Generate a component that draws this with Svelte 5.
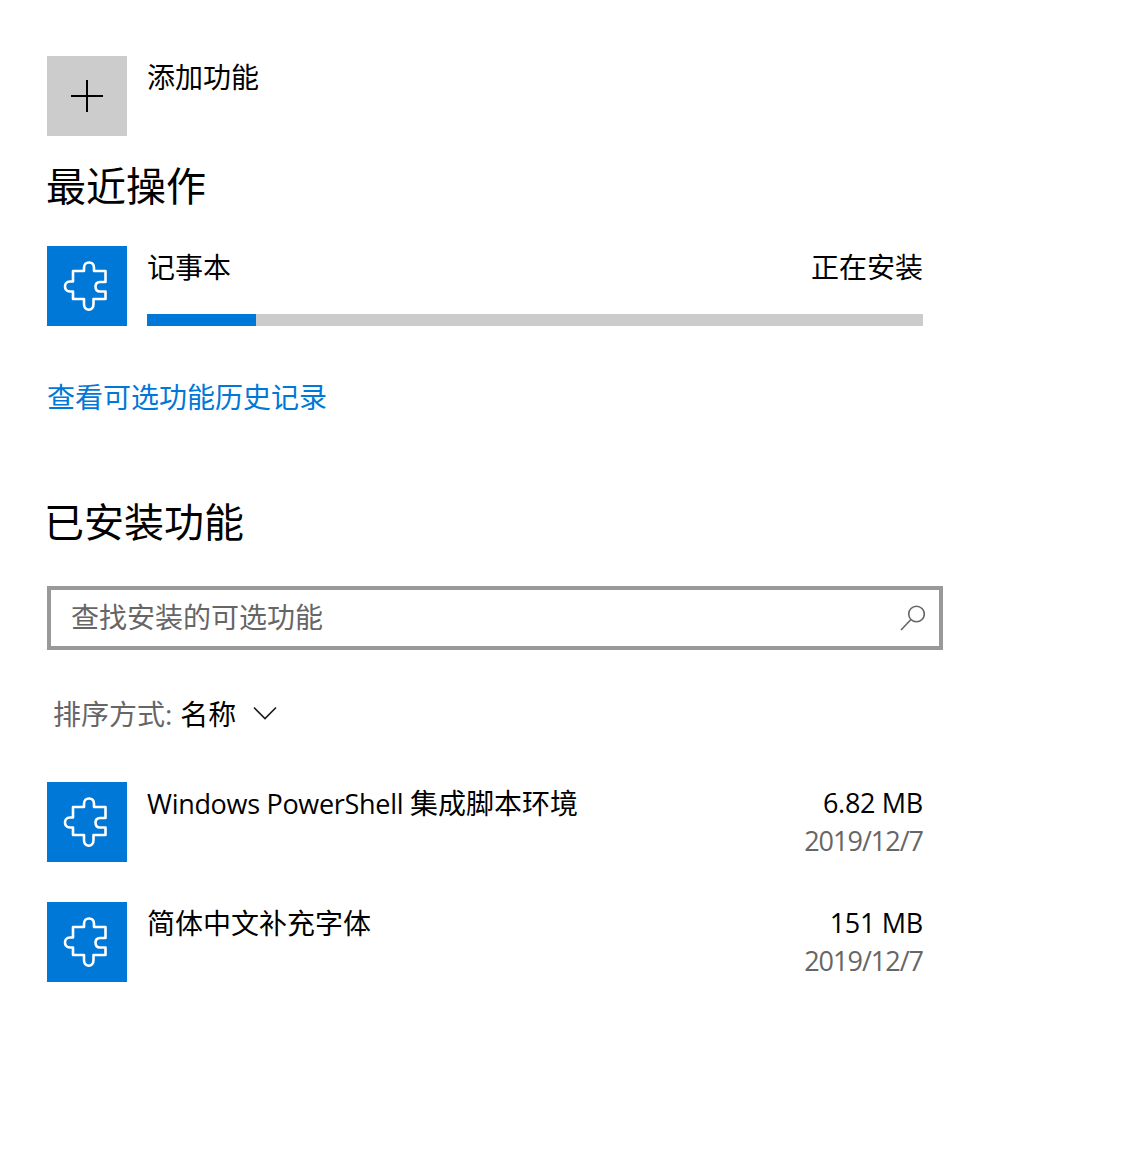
<script>
    const recent = { name: "记事本", status: "正在安装", progress: 14 };
    const features = [
        { latin: "Windows PowerShell ", name: "集成脚本环境", size: "6.82 MB", date: "2019/12/7" },
        { latin: "", name: "简体中文补充字体", size: "151 MB", date: "2019/12/7" }
    ];
</script>

{#snippet puzzle()}
    <svg width="80" height="80" viewBox="0 0 80 80" fill="none">
        <path d="M26 25 H37 V22 C37 18.5 39 16.5 42 16.5 C45 16.5 47 18.5 47 22 V25 H58.5 V36 H53 C50 36 48.5 38 48.5 40.8 C48.5 43.5 50 45.5 53 45.5 H58.5 V53 H46.5 V58 C46.5 61.5 44.5 63.7 41.8 63.7 C39 63.7 37 61.5 37 58 V53 H26 V45.5 H23 C19.5 45.5 18 43 18 40.5 C18 38 19.5 35.5 23 35.5 H26 Z" stroke="#fff" stroke-width="2.6" stroke-linejoin="round"/>
    </svg>
{/snippet}

<main>
    <div class="add">
        <div class="tile plus">
            <svg width="34" height="34" viewBox="0 0 34 34"><path d="M17 1 V33 M1 17 H33" stroke="#000" stroke-width="2"/></svg>
        </div>
        <span class="text">添加功能</span>
    </div>

    <h2 class="recent">最近操作</h2>
    <div class="row">
        <div class="tile">{@render puzzle()}</div>
        <div class="body">
            <div class="line">
                <span class="text">{recent.name}</span>
                <span class="text">{recent.status}</span>
            </div>
            <div class="track"><div class="fill" style="width: {recent.progress}%"></div></div>
        </div>
    </div>

    <div class="link">查看可选功能历史记录</div>

    <h2 class="installed">已安装功能</h2>

    <div class="search">
        <span>查找安装的可选功能</span>
        <svg width="26" height="26" viewBox="0 0 26 26" fill="none" stroke="#666" stroke-width="1.6">
            <circle cx="17.5" cy="9" r="7.8"/>
            <path d="M12 14.5 L2 25"/>
        </svg>
    </div>

    <div class="sort">
        <span class="label">排序方式:</span>
        <span class="value">名称</span>
        <svg width="24" height="14" viewBox="0 0 24 14" fill="none" stroke="#1a1a1a" stroke-width="1.6"><path d="M1 1.5 L12 12.5 L23 1.5"/></svg>
    </div>

    <div class="list">
        {#each features as f}
            <div class="row">
                <div class="tile">{@render puzzle()}</div>
                <div class="body">
                    <div class="line">
                        <span class="text"><span class="latin">{f.latin}</span>{f.name}</span>
                        <span class="text latin">{f.size}</span>
                    </div>
                    <div class="date">{f.date}</div>
                </div>
            </div>
        {/each}
    </div>
</main>

<style>
    :global(body) {
        background: #fff;
    }
    main {
        box-sizing: border-box;
        height: 1151px;
        padding: 56px 0 0 47px;
        width: 943px;
        font-family: "Open Sans", "Noto Sans CJK SC", sans-serif;
        color: #000;
    }
    .add, .row {
        display: flex;
        gap: 20px;
    }
    .tile {
        width: 80px;
        height: 80px;
        flex: none;
        background: #0078d7;
        display: flex;
        align-items: center;
        justify-content: center;
    }
    .tile.plus {
        background: #cccccc;
    }
    .text {
        font-size: 28px;
        line-height: 42px;
        white-space: pre;
    }
    .latin {
        font-size: 27px;
        letter-spacing: -0.3px;
    }
    h2 {
        margin: 0;
        font-weight: 400;
        font-size: 40px;
        line-height: 60px;
    }
    .recent {
        margin: 20px 0 30px -1px;
    }
    .body {
        width: 776px;
    }
    .line {
        display: flex;
        justify-content: space-between;
        height: 42px;
    }
    .track {
        margin-top: 26px;
        height: 12px;
        background: #cccccc;
    }
    .fill {
        height: 100%;
        background: #0078d7;
    }
    .link {
        margin-top: 50px;
        font-size: 28px;
        line-height: 42px;
        color: #0078d7;
    }
    .installed {
        margin: 74px 0 34px -3px;
    }
    .search {
        box-sizing: border-box;
        width: 896px;
        height: 64px;
        border: 4px solid #999;
        display: flex;
        align-items: center;
        justify-content: space-between;
        padding: 0 14px 0 20px;
        font-size: 28px;
        color: #666;
    }
    .search span {
        margin-top: -4px;
    }
    .sort {
        display: flex;
        align-items: center;
        margin: 42px 0 0 6px;
        height: 42px;
        font-size: 28px;
    }
    .label {
        color: #666;
    }
    .value {
        margin-left: 8px;
    }
    .sort svg {
        margin-left: 17px;
    }
    .list {
        margin-top: 48px;
        display: flex;
        flex-direction: column;
        gap: 40px;
    }
    .date {
        font-size: 27px;
        letter-spacing: -1px;
        line-height: 34px;
        color: #666;
        text-align: right;
    }
</style>
